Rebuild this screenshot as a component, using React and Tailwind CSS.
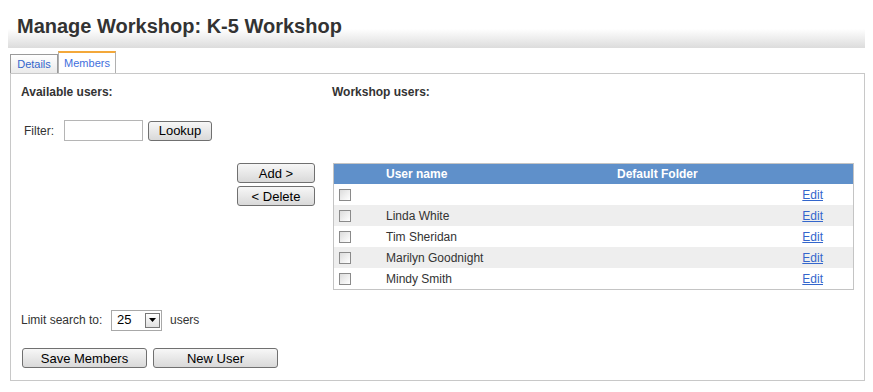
import React from "react";

const users = ["", "Linda White", "Tim Sheridan", "Marilyn Goodnight", "Mindy Smith"];

const Btn = ({ children, className = "" }) => (
  <button
    className={`h-[20px] rounded-[3px] border border-[#707070] bg-gradient-to-b from-[#f7f7f7] to-[#d9d9d9] text-[13px] leading-none text-black ${className}`}
  >
    {children}
  </button>
);

const Check = () => (
  <span className="block h-[12px] w-[12px] border border-[#8a8a8a] bg-gradient-to-br from-[#dcdcdc] to-white" />
);

const App = () => {
  return (
    <div className="h-[392px] w-[873px] bg-white font-['Liberation_Sans',Arial,sans-serif] text-[12px] text-[#333]">
      <div className="ml-[8px] h-[48px] w-[857px] bg-gradient-to-b from-white from-60% to-[#dcdcdc] pl-[9px] pt-[14px]">
        <h1 className="text-[20px] font-bold leading-[24px] text-[#333]">Manage Workshop: K-5 Workshop</h1>
      </div>

      <div className="ml-[10px] mt-[3px] flex h-[22px] items-end">
        <div className="flex h-[19px] w-[48px] items-center justify-center border border-b-0 border-[#9a9a9a] bg-gradient-to-b from-white to-[#eaeaea] text-[11px] text-[#3366cc]">
          Details
        </div>
        <div className="flex h-[22px] w-[58px] items-center justify-center border border-b-0 border-t-2 border-[#b0b0b0] border-t-[#f3a83a] bg-white text-[11px] text-[#3f6fdd]">
          Members
        </div>
      </div>

      <div className="ml-[10px] flex h-[308px] w-[855px] flex-col border border-[#c8c8c8] pl-[10px] pr-[10px]">
        <div className="mt-[11px] flex h-[14px] items-center font-bold">
          <div className="w-[311px]">Available users:</div>
          <div>Workshop users:</div>
        </div>

        <div className="mt-[21px] flex h-[21px] items-center">
          <span className="ml-[3px] w-[40px]">Filter:</span>
          <input className="h-[21px] w-[79px] border border-[#b5b5b5] bg-white" />
          <Btn className="ml-[5px] w-[64px]">Lookup</Btn>
        </div>

        <div className="mt-[22px] flex">
          <div className="flex w-[312px] flex-col items-end gap-[3px] pr-[18px]">
            <Btn className="w-[78px]">Add &gt;</Btn>
            <Btn className="w-[78px]">&lt; Delete</Btn>
          </div>
          <div className="w-[521px] border border-[#c4c4c4]">
            <div className="flex h-[20px] items-center bg-[#5f90ca] font-bold text-white">
              <span className="ml-[52px] w-[231px]">User name</span>
              <span>Default Folder</span>
            </div>
            {users.map((u, i) => (
              <div
                key={i}
                className={`flex h-[21px] items-center ${i % 2 ? "bg-[#eeeeee]" : "bg-white"}`}
              >
                <span className="ml-[5px] w-[47px]">
                  <Check />
                </span>
                <span className="flex-1">{u}</span>
                <a href="#" className="mr-[30px] text-[#3366cc] underline">
                  Edit
                </a>
              </div>
            ))}
          </div>
        </div>

        <div className="mt-[20px] flex h-[20px] items-center">
          <span className="w-[90px]">Limit search to:</span>
          <div className="flex h-[21px] w-[51px] items-center justify-between border border-[#a8a8a8] pl-[5px] pr-[1px]">
            <span className="text-[13px] text-black">25</span>
            <span className="flex h-[15px] w-[15px] items-center justify-center border border-[#777] bg-gradient-to-b from-white to-[#e0e0e0]">
              <svg width="7" height="4" viewBox="0 0 7 4">
                <path d="M0 0h7L3.5 4z" fill="#000" />
              </svg>
            </span>
          </div>
          <span className="ml-[8px]">users</span>
        </div>

        <div className="mt-[18px] flex gap-[6px] pl-[1px]">
          <Btn className="w-[125px]">Save Members</Btn>
          <Btn className="w-[125px]">New User</Btn>
        </div>
      </div>
    </div>
  );
};

export default App;
